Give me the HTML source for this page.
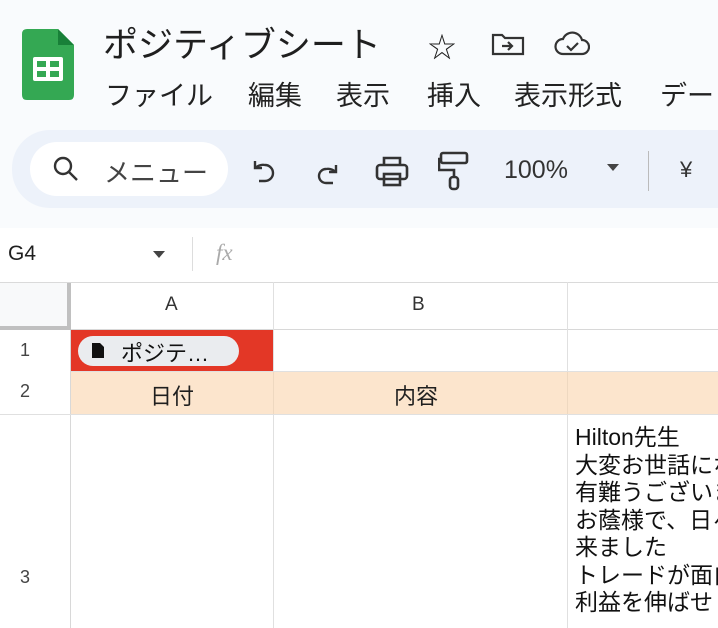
<!DOCTYPE html><html><head><meta charset="utf-8"><style>
*{margin:0;padding:0;box-sizing:border-box}
body{width:718px;height:628px;overflow:hidden;background:#f9fbfd;font-family:"Liberation Sans","Noto Sans CJK JP",sans-serif;color:#1f1f1f;position:relative}
.a{position:absolute;white-space:nowrap}
.m{position:absolute;top:74px;font-size:27px;color:#222;white-space:nowrap}
</style></head><body>
<svg class="a" style="left:22px;top:29px" width="52" height="72" viewBox="0 0 52 72">
<path d="M5 0H36L52 16V66Q52 71 47 71H5Q0 71 0 66V5Q0 0 5 0Z" fill="#34a853"/>
<path d="M36 0V16H52Z" fill="#188038"/>
<rect x="11" y="28" width="30" height="24" rx="2" fill="#fff"/>
<rect x="15" y="32" width="9" height="6" fill="#34a853"/><rect x="28" y="32" width="9" height="6" fill="#34a853"/>
<rect x="15" y="42" width="9" height="6" fill="#34a853"/><rect x="28" y="42" width="9" height="6" fill="#34a853"/>
</svg>
<div class="a" style="left:103px;top:17px;font-size:35px">ポジティブシート</div>
<div class="a" style="left:428px;top:26px;font-size:28px">☆</div>
<svg class="a" style="left:491px;top:32px" width="34" height="24" viewBox="0 0 34 24" fill="none" stroke="#333" stroke-width="2.2"><path d="M2 3H11L14 6H32V22H2Z"/><path d="M11 14H21M17 10L21 14L17 18"/></svg>
<svg class="a" style="left:554px;top:30px" width="36" height="26" viewBox="0 0 36 26" fill="none" stroke="#333" stroke-width="2.2"><path d="M9 24H28A7 7 0 0 0 28 10A10 10 0 0 0 9 9A7.5 7.5 0 0 0 9 24Z"/><path d="M13 16L17 20L24 13"/></svg>
<div class="m" style="left:105px">ファイル</div>
<div class="m" style="left:248px">編集</div>
<div class="m" style="left:336px">表示</div>
<div class="m" style="left:427px">挿入</div>
<div class="m" style="left:514px">表示形式</div>
<div class="m" style="left:660px;width:58px;overflow:hidden">デー</div>
<div class="a" style="left:12px;top:130px;width:706px;height:78px;background:#edf2fa;border-radius:38px 0 0 38px"></div>
<div class="a" style="left:30px;top:142px;width:198px;height:54px;background:#fff;border-radius:27px"></div>
<svg class="a" style="left:51px;top:154px" width="30" height="30" viewBox="0 0 30 30" fill="none" stroke="#333" stroke-width="2.4"><circle cx="12" cy="12" r="8"/><path d="M18 18L26 26"/></svg>
<div class="a" style="left:104px;top:153px;font-size:26px;color:#444">メニュー</div>
<svg class="a" style="left:250px;top:157px" width="28" height="30" viewBox="0 0 28 30" fill="none" stroke="#333" stroke-width="2.4"><path d="M5 4V11H12"/><path d="M5 11Q10 7 15 8A7 7 0 0 1 15 24H9"/></svg>
<svg class="a" style="left:313px;top:160px" width="28" height="28" viewBox="0 0 28 28" fill="none" stroke="#333" stroke-width="2.4"><path d="M23 5V12H16"/><path d="M23 12Q18 8 13 9A7 7 0 0 0 13 23H20"/></svg>
<svg class="a" style="left:374px;top:155px" width="36" height="34" viewBox="0 0 36 34" fill="none" stroke="#333" stroke-width="2.6"><path d="M10 10V3H26V10"/><rect x="3" y="10" width="30" height="14" rx="3"/><rect x="10" y="19" width="16" height="11"/></svg>
<svg class="a" style="left:438px;top:150px" width="32" height="42" viewBox="0 0 32 42" fill="none" stroke="#333" stroke-width="2.6"><rect x="3" y="3" width="26" height="10" rx="2"/><path d="M3 9H1V20H16V27"/><rect x="12" y="27" width="8" height="12" rx="3"/></svg>
<div class="a" style="left:504px;top:156px;font-size:25px;color:#333">100%</div>
<div class="a" style="left:607px;top:164px;width:0;height:0;border-left:6px solid transparent;border-right:6px solid transparent;border-top:7px solid #444"></div>
<div class="a" style="left:648px;top:151px;width:1px;height:40px;background:#bbb"></div>
<div class="a" style="left:680px;top:157px;font-size:22px;color:#333">¥</div>
<div class="a" style="left:0;top:228px;width:718px;height:54px;background:#fff"></div>
<div class="a" style="left:8px;top:242px;font-size:21px">G4</div>
<div class="a" style="left:153px;top:251px;width:0;height:0;border-left:6px solid transparent;border-right:6px solid transparent;border-top:7px solid #444"></div>
<div class="a" style="left:192px;top:237px;width:1px;height:34px;background:#ddd"></div>
<div class="a" style="left:216px;top:240px;font-size:23px;font-style:italic;font-family:'Liberation Serif',serif;color:#aaa">fx</div>
<div class="a" style="left:0;top:282px;width:718px;height:346px;background:#fff"></div>
<div class="a" style="left:0;top:282px;width:71px;height:48px;background:#f8f9fa;border-right:4px solid #c0c0c0;border-bottom:4px solid #c0c0c0"></div>
<div class="a" style="left:71px;top:282px;width:647px;height:48px;background:#fff;border-top:1px solid #e0e0e0;border-bottom:1px solid #d8d8d8"></div>
<div class="a" style="left:0;top:330px;width:71px;height:298px;background:#fff;border-right:1px solid #d8d8d8"></div>
<div class="a" style="left:0;top:282px;width:718px;height:1px;background:#dadada"></div>
<div class="a" style="left:165px;top:294px;font-size:19px;color:#333">A</div>
<div class="a" style="left:412px;top:294px;font-size:19px;color:#333">B</div>
<div class="a" style="left:273px;top:282px;width:1px;height:346px;background:#e0e0e0"></div>
<div class="a" style="left:567px;top:282px;width:1px;height:346px;background:#e0e0e0"></div>
<div class="a" style="left:71px;top:330px;width:202px;height:41px;background:#e33726"></div>
<div class="a" style="left:78px;top:336px;width:161px;height:30px;background:#eaecef;border-radius:15px"></div>
<svg class="a" style="left:92px;top:343px" width="12" height="15" viewBox="0 0 12 15"><path d="M0 0H8L12 4V15H0Z" fill="#111"/></svg>
<div class="a" style="left:121px;top:336px;font-size:22px;color:#111">ポジテ…</div>
<div class="a" style="left:20px;top:340px;font-size:18px;color:#444">1</div>
<div class="a" style="left:71px;top:371px;width:647px;height:1px;background:#e0e0e0"></div>
<div class="a" style="left:71px;top:372px;width:647px;height:42px;background:#fce5cd"></div>
<div class="a" style="left:273px;top:372px;width:1px;height:42px;background:#eed8c0"></div>
<div class="a" style="left:567px;top:372px;width:1px;height:42px;background:#eed8c0"></div>
<div class="a" style="left:20px;top:381px;font-size:18px;color:#444">2</div>
<div class="a" style="left:150px;top:379px;font-size:22px">日付</div>
<div class="a" style="left:394px;top:379px;font-size:22px">内容</div>
<div class="a" style="left:0;top:414px;width:718px;height:1px;background:#e0e0e0"></div>
<div class="a" style="left:20px;top:567px;font-size:18px;color:#444">3</div>
<div class="a" style="left:575px;top:424px;width:143px;height:204px;overflow:hidden;font-size:23px;line-height:27.5px;color:#111">Hilton先生<br>大変お世話になり<br>有難うございます<br>お蔭様で、日々<br>来ました<br>トレードが面白く<br>利益を伸ばせ</div>
</body></html>
